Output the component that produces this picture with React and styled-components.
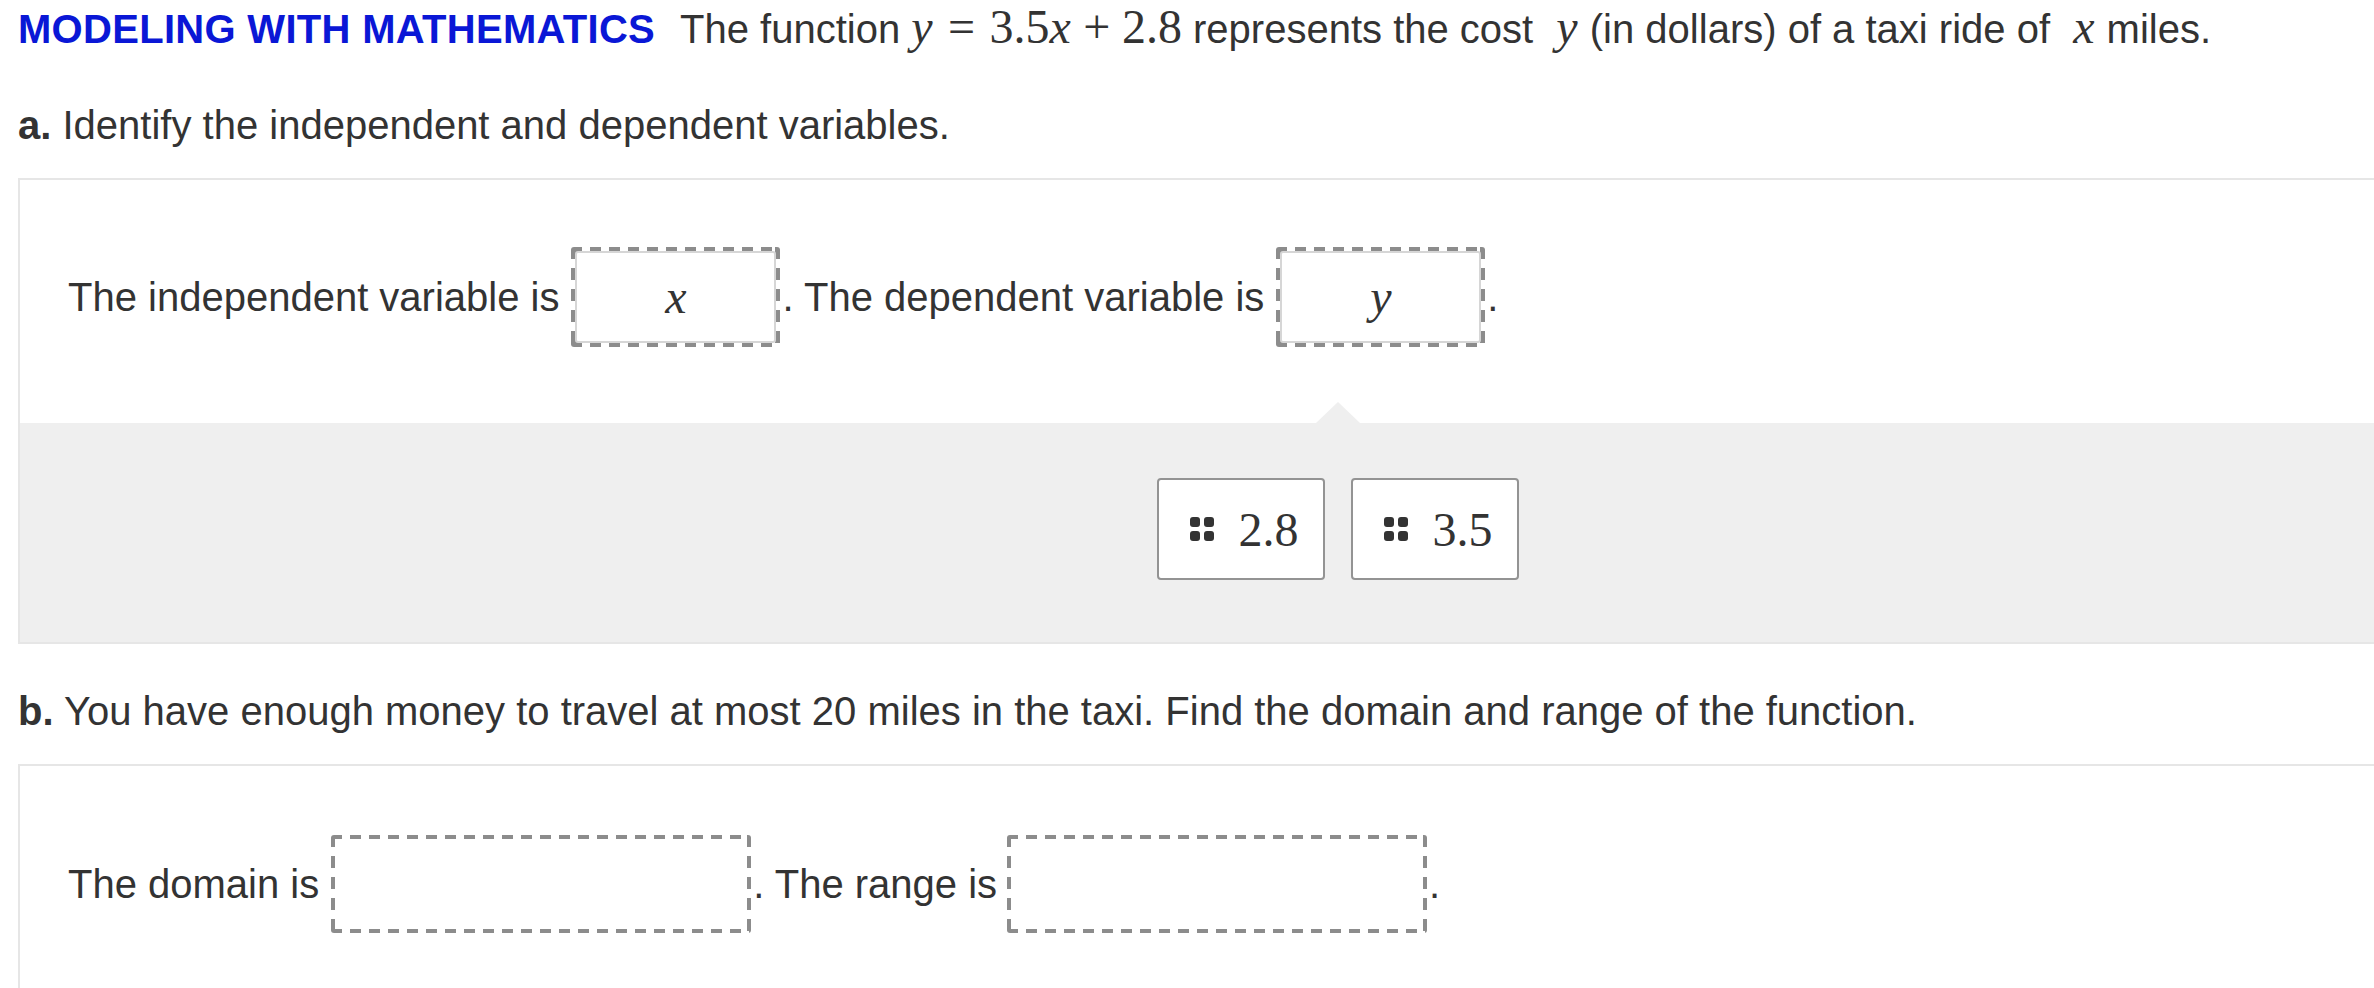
import React from "react";
import styled, { createGlobalStyle, css } from "styled-components";

const GlobalStyle = createGlobalStyle`
  html, body {
    margin: 0;
    padding: 0;
    overflow: hidden;
    background: #fff;
  }
  body {
    font-family: "Liberation Sans", Arial, Helvetica, sans-serif;
    color: #333;
  }
`;

const Page = styled.div`
  padding: 3px 0 0 18px;
  width: 2640px;
`;

const Title = styled.div`
  font-size: 40px;
  line-height: 48px;
  white-space: nowrap;
`;

const Label = styled.span`
  font-weight: bold;
  color: #0a17d6;
  margin-right: 25px;
  letter-spacing: 0.3px;
`;

const Math = styled.span`
  font-family: "Liberation Serif", "Times New Roman", serif;
  font-size: 48px;
  line-height: 48px;
  margin-left: ${(p) => (p.$gap ? "12px" : "0")};
`;

const Var = styled.i`
  margin-right: 1px;
`;

const Op = styled.span`
  margin: 0 ${(p) => p.$space || "0.3em"};
`;

const Part = styled.div`
  font-size: 40px;
  line-height: 48px;
  margin-top: ${(p) => p.$top};
  white-space: nowrap;
`;

const PartLetter = styled.b`
  font-weight: bold;
`;

const Panel = styled.div`
  margin-top: ${(p) => p.$top};
  border: 2px solid #e6e6e6;
  background: #fff;
`;

const Sentence = styled.div`
  display: flex;
  align-items: center;
  padding: ${(p) => p.$pad};
  font-size: 40px;
  line-height: 48px;
  white-space: nowrap;
`;

const dashed = (w) => css`
  background:
    repeating-linear-gradient(90deg, #8c8c8c 0 11px, transparent 11px 19px) left top / 100% ${w}px no-repeat,
    repeating-linear-gradient(90deg, #8c8c8c 0 11px, transparent 11px 19px) left bottom / 100% ${w}px no-repeat,
    repeating-linear-gradient(180deg, #8c8c8c 0 12px, transparent 12px 21px) left top / ${w}px 100% no-repeat,
    repeating-linear-gradient(180deg, #8c8c8c 0 12px, transparent 12px 21px) right top / ${w}px 100% no-repeat,
    #fff;
`;

const DropZone = styled.div`
  box-sizing: border-box;
  flex: none;
  width: ${(p) => (p.$filled ? "209px" : "420px")};
  height: ${(p) => (p.$filled ? "100px" : "98px")};
  margin: 0 2px 0 ${(p) => p.$left || "12px"};
  padding: ${(p) => (p.$filled ? "4px" : "4px")};
  border-radius: 3px;
  ${(p) => dashed(p.$filled ? 5 : 4)}
`;

const Placed = styled.div`
  box-sizing: border-box;
  height: 100%;
  display: flex;
  align-items: center;
  justify-content: center;
  border: 2px solid #d6d6d6;
  border-radius: 3px;
  background: #fff;
  font-family: "Liberation Serif", "Times New Roman", serif;
  font-size: 48px;
  font-style: italic;
  color: #333;
`;

const Tray = styled.div`
  position: relative;
  background: #efefef;
  padding: 55px 0 62px;
  display: flex;
  justify-content: center;
  gap: 26px;

  &::before {
    content: "";
    position: absolute;
    left: 50%;
    top: -21px;
    transform: translateX(-50%);
    border-left: 22px solid transparent;
    border-right: 22px solid transparent;
    border-bottom: 21px solid #efefef;
  }
`;

const Chip = styled.div`
  box-sizing: border-box;
  width: 168px;
  height: 102px;
  display: flex;
  align-items: center;
  justify-content: center;
  gap: 25px;
  padding-left: 6px;
  background: #fff;
  border: 2px solid #939393;
  border-radius: 4px;
  font-family: "Liberation Serif", "Times New Roman", serif;
  font-size: 48px;
  color: #333;
`;

const Handle = () => (
  <svg width="24" height="24" viewBox="0 0 24 24">
    <rect x="0" y="0" width="10" height="10" rx="3" fill="#333" />
    <rect x="14" y="0" width="10" height="10" rx="3" fill="#333" />
    <rect x="0" y="14" width="10" height="10" rx="3" fill="#333" />
    <rect x="14" y="14" width="10" height="10" rx="3" fill="#333" />
  </svg>
);

export default function App() {
  return (
    <Page>
      <GlobalStyle />
      <Title>
        <Label>MODELING WITH MATHEMATICS</Label>The function{" "}
        <Math>
          <Var>y</Var>
          <Op>=</Op>3.5<Var>x</Var>
          <Op $space="0.24em">+</Op>2.8
        </Math>{" "}
        represents the cost{" "}
        <Math $gap>
          <Var>y</Var>
        </Math>{" "}
        (in dollars) of a taxi ride of{" "}
        <Math $gap>
          <Var>x</Var>
        </Math>{" "}
        miles.
      </Title>

      <Part $top="48px">
        <PartLetter>a.</PartLetter> Identify the independent and dependent
        variables.
      </Part>

      <Panel $top="29px">
        <Sentence $pad="67px 48px 76px">
          The independent variable is
          <DropZone $filled>
            <Placed>x</Placed>
          </DropZone>
          . The dependent variable is
          <DropZone $filled>
            <Placed>y</Placed>
          </DropZone>
          .
        </Sentence>
        <Tray>
          <Chip>
            <Handle />
            2.8
          </Chip>
          <Chip>
            <Handle />
            3.5
          </Chip>
        </Tray>
      </Panel>

      <Part $top="43px">
        <PartLetter>b.</PartLetter> You have enough money to travel at most 20
        miles in the taxi. Find the domain and range of the function.
      </Part>

      <Panel $top="29px">
        <Sentence $pad="69px 48px 76px">
          The domain is
          <DropZone />
          . The range is
          <DropZone $left="10px" />
          .
        </Sentence>
      </Panel>
    </Page>
  );
}
